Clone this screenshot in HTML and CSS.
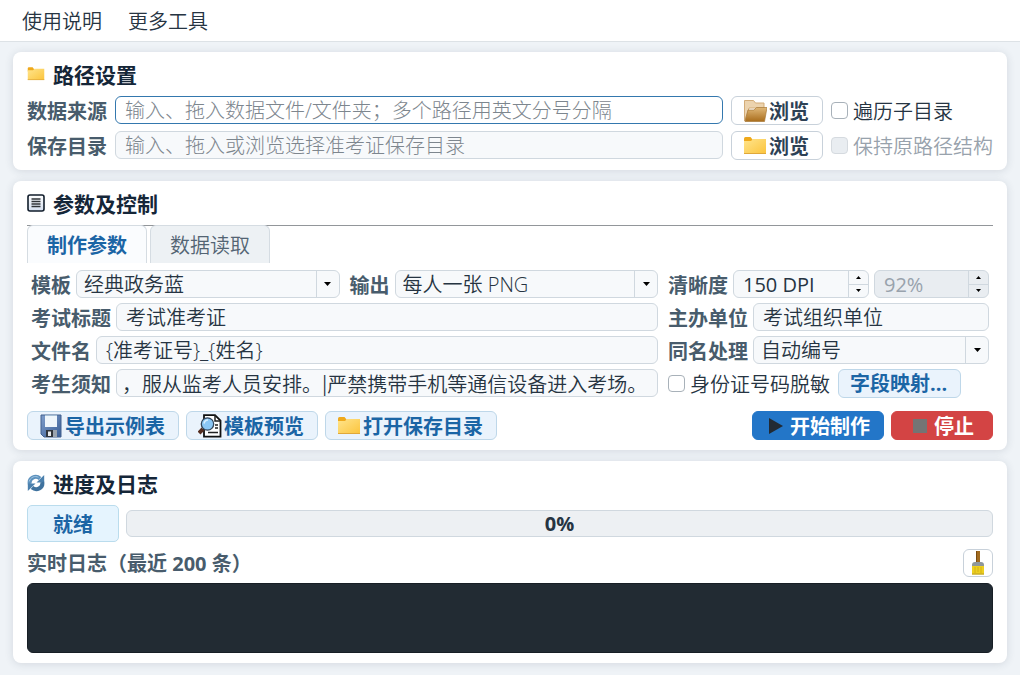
FILE: index.html
```
<!DOCTYPE html>
<html lang="zh-CN">
<head>
<meta charset="utf-8">
<title>准考证制作</title>
<link rel="stylesheet" href="styles.css">
</head>
<body>
<svg class="defs" aria-hidden="true">
  <defs>
    <linearGradient id="gold" x1="0" y1="0" x2="1" y2="1"><stop offset="0" stop-color="#ffe48c"/><stop offset="1" stop-color="#fbc43c"/></linearGradient>
    <linearGradient id="tan" x1="0" y1="0" x2="0" y2="1"><stop offset="0" stop-color="#e0b878"/><stop offset="1" stop-color="#a96d1c"/></linearGradient>
    <linearGradient id="steel" x1="0" y1="0" x2="1" y2="1"><stop offset="0" stop-color="#7f9ecb"/><stop offset="1" stop-color="#3b5f96"/></linearGradient>
    <linearGradient id="sheet" x1="0" y1="0" x2="0" y2="1"><stop offset="0" stop-color="#ffffff"/><stop offset="1" stop-color="#d5dfef"/></linearGradient>
    <symbol id="folder" viewBox="0 0 24 24">
      <path d="M1 4.500q0-1.500 1.500-1.500h5l2 2.500v3H1z" fill="#efa91c"/>
      <path d="M1 7h7l2-2h13v15H1z" fill="url(#gold)"/>
      <path d="M1 19.500h22" stroke="#e0a83a"/>
    </symbol>
    <symbol id="folder-open" viewBox="0 0 24 24">
      <path d="M1.500 22V1.500h9l2 2.500h8.500v5H6z" fill="#ecd3ae" stroke="#d3ac78"/>
      <path d="M2 22.500L5 11h6l2.500-2.500H24L21.500 22.500z" fill="url(#tan)" stroke="#a87838" stroke-width=".7"/>
    </symbol>
    <symbol id="arrow-down" viewBox="0 0 7 4"><path d="M0 0h7L3.500 4z" fill="#000"/></symbol>
    <symbol id="arrow-up" viewBox="0 0 7 4"><path d="M0 4h7L3.500 0z" fill="#000"/></symbol>
  </defs>
</svg>

<nav class="menubar">
  <button type="button" class="menu-item">使用说明</button>
  <button type="button" class="menu-item">更多工具</button>
</nav>

<main class="page">
  <section class="card">
    <h2 class="title"><svg class="title-icon"><use href="#folder"/></svg>路径设置</h2>
    <div class="paths">
      <label class="label" for="source">数据来源</label>
      <input class="field field-active" id="source" type="text" placeholder="输入、拖入数据文件/文件夹；多个路径用英文分号分隔">
      <button type="button" class="btn"><svg class="icon"><use href="#folder-open"/></svg>浏览</button>
      <label class="check"><input type="checkbox">遍历子目录</label>
      <label class="label" for="target">保存目录</label>
      <input class="field" id="target" type="text" placeholder="输入、拖入或浏览选择准考证保存目录">
      <button type="button" class="btn"><svg class="icon"><use href="#folder"/></svg>浏览</button>
      <label class="check check-off"><input type="checkbox" disabled>保持原路径结构</label>
    </div>
  </section>

  <section class="card">
    <h2 class="title"><svg class="title-icon" viewBox="0 0 18 18"><rect x="1" y="1" width="16" height="16" rx="2" fill="url(#sheet)" stroke="#111d2b" stroke-width="1.600"/><path d="M4.500 5h9M4.500 7.500h9M4.500 10h9M4.500 12.500h9" stroke="#303438" stroke-width="1.300"/></svg>参数及控制</h2>
    <div class="tabs" role="tablist">
      <button type="button" class="tab tab-on" role="tab" aria-selected="true">制作参数</button>
      <button type="button" class="tab" role="tab" aria-selected="false">数据读取</button>
    </div>
    <div class="form">
      <div class="row row-split">
        <div class="row">
          <label class="label" for="template">模板</label>
          <span class="combo"><select class="field" id="template"><option>经典政务蓝</option></select><span class="drop"><svg class="arrow"><use href="#arrow-down"/></svg></span></span>
        </div>
        <div class="row">
          <label class="label" for="output">输出</label>
          <span class="combo"><select class="field" id="output"><option>每人一张 PNG</option></select><span class="drop"><svg class="arrow"><use href="#arrow-down"/></svg></span></span>
        </div>
      </div>
      <div class="row">
        <label class="label" for="dpi">清晰度</label>
        <span class="spin spin-wide"><input class="field" id="dpi" type="text" value="150 DPI"><span class="steps"><button type="button" aria-label="增加"><svg class="step-arrow"><use href="#arrow-up"/></svg></button><button type="button" aria-label="减少"><svg class="step-arrow"><use href="#arrow-down"/></svg></button></span></span>
        <span class="spin"><input class="field" type="text" value="92%" aria-label="质量" disabled><span class="steps"><button type="button" aria-label="增加"><svg class="step-arrow"><use href="#arrow-up"/></svg></button><button type="button" aria-label="减少"><svg class="step-arrow"><use href="#arrow-down"/></svg></button></span></span>
      </div>

      <div class="row">
        <label class="label" for="exam">考试标题</label>
        <input class="field" id="exam" type="text" value="考试准考证">
      </div>
      <div class="row">
        <label class="label" for="host">主办单位</label>
        <input class="field" id="host" type="text" value="考试组织单位">
      </div>

      <div class="row">
        <label class="label" for="filename">文件名</label>
        <input class="field" id="filename" type="text" value="{准考证号}_{姓名}">
      </div>
      <div class="row">
        <label class="label" for="same">同名处理</label>
        <span class="combo"><select class="field" id="same"><option>自动编号</option></select><span class="drop"><svg class="arrow"><use href="#arrow-down"/></svg></span></span>
      </div>

      <div class="row">
        <label class="label" for="notice">考生须知</label>
        <input class="field field-notice" id="notice" type="text" value="，服从监考人员安排。|严禁携带手机等通信设备进入考场。">
      </div>
      <div class="row">
        <label class="check"><input type="checkbox">身份证号码脱敏</label>
        <button type="button" class="btn btn-soft">字段映射...</button>
      </div>
    </div>
    <div class="actions">
      <button type="button" class="btn btn-soft"><svg class="icon" viewBox="0 0 24 24"><path d="M2 1h20v22H5l-3-3z" fill="url(#steel)" stroke="#43618e"/><path d="M6 1h12v12H6z" fill="#eff6fb"/><path d="M6 1.500h12" stroke="#a5bed4"/><path d="M7 16h11v7H7z" fill="#30353b"/><path d="M14 16h4v7h-4z" fill="#9ba4ae"/><path d="M9 17.500h3V22H9z" fill="#e8eaec"/></svg>导出示例表</button>
      <button type="button" class="btn btn-soft"><svg class="icon" viewBox="0 0 24 24"><path d="M6 1.200h11l5.500 5.500v16H6z" fill="#fff" stroke="#111" stroke-width="1.800"/><path d="M17 1v6h6M17 11h3M17 14h3M10 18.500h10" fill="none" stroke="#222" stroke-width="1.500"/><path d="M5 15L1 19" stroke="#552d1f" stroke-width="4"/><circle cx="9.500" cy="10" r="6.200" fill="#8bc7f5" stroke="#34465a" stroke-width="1.300"/><path d="M6 9.500q.8-3.500 4-3.500" fill="none" stroke="#d9efff" stroke-width="1.500"/></svg>模板预览</button>
      <button type="button" class="btn btn-soft"><svg class="icon"><use href="#folder"/></svg>打开保存目录</button>
      <button type="button" class="btn btn-start"><svg class="icon" viewBox="0 0 24 24"><path d="M5 4v16l14-8z" fill="#222a33"/></svg>开始制作</button>
      <button type="button" class="btn btn-stop"><svg class="icon" viewBox="0 0 24 24"><path d="M5 5h14v14H5z" fill="#747474"/></svg>停止</button>
    </div>
  </section>

  <section class="card">
    <h2 class="title"><svg class="title-icon" viewBox="0 0 18 18"><path d="M2.800 10C1.500 4 8.500.8 13 4.500" fill="none" stroke="#5c91bd" stroke-width="4"/><path d="M9.500 8.500H17.200V1z" fill="#4b80ad"/><path d="M15.200 8c1.300 6-5.700 9.200-10.200 5.500" fill="none" stroke="#3f729e" stroke-width="4"/><path d="M8.500 9.500H.8V17z" fill="#4b80ad"/><path d="M2.200 7.500C3.500 3 8 1.500 11.500 3.300" fill="none" stroke="#a4c7e3" stroke-width="1"/></svg>进度及日志</h2>
    <div class="progress-row">
      <output class="state">就绪</output>
      <div class="progress" role="progressbar" aria-valuenow="0" aria-valuemin="0" aria-valuemax="100">0%</div>
    </div>
    <div class="log-head">
      <span class="label">实时日志（最近 200 条）</span>
      <button type="button" class="btn btn-clear" aria-label="清空日志"><svg class="icon" viewBox="0 0 24 24"><path d="M10 0h4v12h-4z" fill="#a26b20"/><path d="M10.500 0v11" stroke="#7a4b10"/><path d="M6 14q0-3 3-3h6q3 0 3 3v1H6z" fill="#8f979b"/><path d="M6 15h12v8.500H6z" fill="#edcf20"/><path d="M9 16v6M12 16v5M15 16v6" stroke="#d3b214"/><path d="M6 23h12" stroke="#b89d26"/></svg></button>
    </div>
    <div class="log" role="log"></div>
  </section>
</main>
</body>
</html>
```
FILE: styles.css
```
* { box-sizing: border-box; }

body {
  margin: 0;
  min-height: 100vh;
  background: #eff3f7;
  color: #263442;
  font: 350 20px/28px "Open Sans", "Noto Sans CJK SC", sans-serif;
}

button, input, select { font: inherit; color: inherit; margin: 0; }
svg { display: block; flex: none; }
.defs { position: absolute; width: 0; height: 0; }

.menubar {
  display: flex;
  gap: 26px;
  padding: 8px 22px 5px;
  background: #fff;
  border-bottom: 1px solid #dde2e6;
}
.menu-item { padding: 0; border: 0; background: none; }

.page {
  display: flex;
  flex-direction: column;
  gap: 11px;
  padding: 10px 13px;
}
.card {
  display: flex;
  flex-direction: column;
  gap: 6px;
  padding: 10px 14px;
  background: #fff;
  border-radius: 8px;
  box-shadow: 0 1px 8px rgba(40, 60, 80, 0.14);
}
.title {
  display: flex;
  align-items: center;
  gap: 8px;
  margin: 0;
  padding-bottom: 2px;
  color: #152638;
  font-size: 21px;
  line-height: 26px;
  font-weight: 700;
}
.title-icon { width: 18px; height: 18px; margin-bottom: 2px; }

.label {
  padding-top: 2px;
  color: #485c6c;
  font-weight: 700;
  line-height: 27px;
  white-space: nowrap;
}

.field {
  flex: 1;
  width: 100%;
  min-width: 0;
  height: 28px;
  padding: 2px 9px 0;
  border: 1px solid #d0d8df;
  border-radius: 6px;
  background: #f7f9fb;
  outline: none;
}
.field::placeholder { color: #7d868e; font-weight: 300; opacity: 1; }
.field:disabled { background: #e9edf1; color: #98a2ac; }
.field-active { border-color: #3478ae; background: #fff; }
.field-notice { padding: 2px 5px 0; font-family: "Noto Sans CJK SC", sans-serif; }

.paths {
  display: grid;
  grid-template-columns: auto minmax(0, 1fr) auto auto;
  gap: 6px 8px;
  align-items: start;
}

.btn {
  display: flex;
  align-items: center;
  justify-content: center;
  gap: 2px;
  height: 29px;
  padding: 2px 13px 0 11px;
  border: 1px solid #c8d1da;
  border-radius: 6px;
  background: #fff;
  color: #2d4155;
  font-weight: 700;
  line-height: 24px;
  white-space: nowrap;
}
.icon { width: 24px; height: 24px; margin-bottom: 2px; }
.btn-soft { border-color: #bed7e9; background: #eaf3fc; color: #1b65a5; }
.btn-start { margin-left: auto; border-color: #2376c8; background: #2376c8; color: #fff; }
.btn-stop { padding: 2px 18px 0 16px; border-color: #d34444; background: #d34444; color: #fff; }
.btn-clear { height: 28px; padding: 2px 2px 0; }

.check {
  display: flex;
  align-items: center;
  gap: 5px;
  padding-top: 2px;
  line-height: 27px;
  white-space: nowrap;
}
.check input {
  appearance: none;
  width: 17px;
  height: 17px;
  margin-bottom: 2px;
  border: 1px solid #a8b1b9;
  border-radius: 4px;
  background: #fff;
}
.check-off { color: #98a2ac; }
.check-off input { border-color: #d5dadf; background: #e9edf1; }

.tabs { display: flex; gap: 3px; border-top: 1px solid #92969a; }
.tab {
  width: 120px;
  height: 38px;
  margin-top: -1px;
  padding: 2px 0 0;
  border: 1px solid #d5dce2;
  border-bottom: 0;
  border-radius: 6px 6px 0 0;
  background: #edf1f4;
  color: #536473;
}
.tab-on { background: #fafcfe; color: #1b65a5; font-weight: 700; }

.form {
  display: grid;
  grid-template-columns: minmax(0, 1fr) 321px;
  gap: 5px 10px;
  padding: 1px 4px 8px;
}
.row { display: flex; align-items: center; gap: 5px; height: 28px; min-width: 0; }
.row-split { gap: 10px; }
.row-split .row { flex: 1; }
.row .check { margin-right: 3px; }

.combo, .spin { position: relative; display: flex; flex: 1; min-width: 0; }
.spin-wide { flex: none; width: 136px; }
.spin .field { font-weight: 400; }
.combo .field { appearance: none; padding: 0 28px 0 7px; }
.drop {
  position: absolute;
  top: 1px;
  right: 1px;
  bottom: 1px;
  width: 23px;
  display: grid;
  place-items: center;
  border-left: 1px solid #d0d8df;
  pointer-events: none;
}
.arrow { width: 7px; height: 4px; }
.steps {
  position: absolute;
  top: 1px;
  right: 1px;
  bottom: 1px;
  width: 20px;
  display: grid;
  border-left: 1px solid #d0d8df;
}
.steps button { display: grid; place-items: center; padding: 0; border: 0; background: none; }
.steps button + button { border-top: 1px solid #d0d8df; }
.step-arrow { width: 5px; height: 3px; }

.actions { display: flex; gap: 7px; }

.progress-row { display: flex; align-items: center; gap: 7px; }
.state {
  width: 92px;
  height: 37px;
  border: 1px solid #badced;
  border-radius: 5px;
  background: #e5f4fe;
  color: #1b65a5;
  font-weight: 700;
  line-height: 37px;
  text-align: center;
}
.progress {
  flex: 1;
  height: 27px;
  border: 1px solid #d0d8df;
  border-radius: 6px;
  background: #edf0f3;
  font-weight: 700;
  line-height: 25px;
  text-align: center;
}
.log-head { display: flex; align-items: center; justify-content: space-between; }
.log { height: 70px; border: 1px solid #171e25; border-radius: 6px; background: #222b33; }
```
